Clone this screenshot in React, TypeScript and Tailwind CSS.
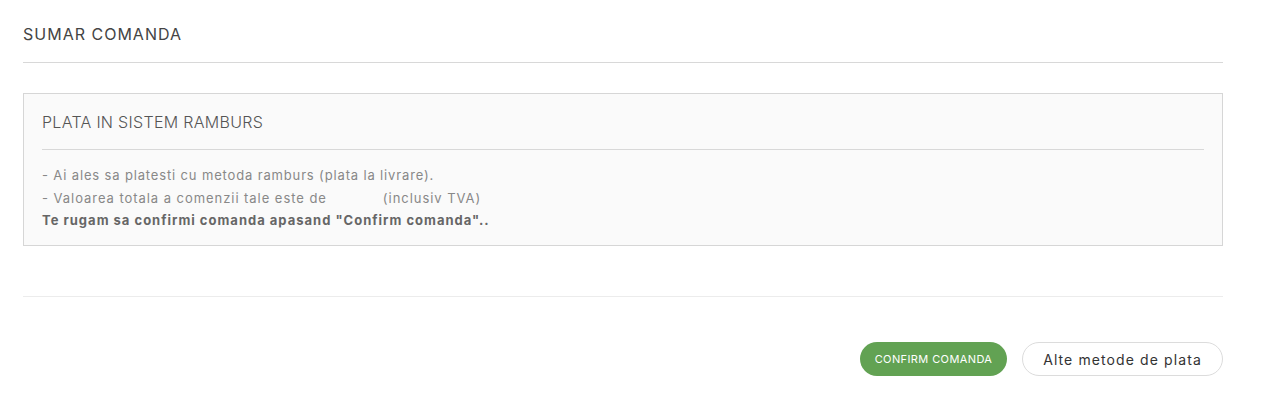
import React from 'react';

const font = { fontFamily: 'Inter, "Open Sans", "Liberation Sans", sans-serif' };

export default function App() {
  return (
    <div className="w-[1284px] h-[407px] bg-white" style={font}>
      <div className="w-[1200px] ml-[23px] pt-[24px]">
        {/* Header */}
        <h2 className="text-[16px] leading-[20px] text-[#444] tracking-[1px]">SUMAR COMANDA</h2>
        <div className="mt-[18px] h-px bg-[#d8d8d8]" />

        {/* Payment info box */}
        <div className="mt-[30px] h-[153px] border border-[#d6d6d6] bg-[#fafafa] px-[18px] pt-[18px]">
          <h3 className="text-[16px] leading-[20px] text-[#555] font-light tracking-[0.3px]">PLATA IN SISTEM RAMBURS</h3>
          <div className="mt-[17px] h-px bg-[#d8d8d8]" />
          <div className="mt-[14px] text-[13px] leading-[22.5px] text-[#888] tracking-[0.85px]">
            <p>- Ai ales sa platesti cu metoda ramburs (plata la livrare).</p>
            <p className="tracking-[0.95px]">
              - Valoarea totala a comenzii tale este de
              <span className="inline-block w-[56px]" />
              (inclusiv TVA)
            </p>
            <p className="font-bold text-[#666] tracking-[1px]">Te rugam sa confirmi comanda apasand "Confirm comanda"..</p>
          </div>
        </div>

        <div className="mt-[50px] h-px bg-[#ececec]" />

        {/* Actions */}
        <div className="mt-[45px] flex justify-end gap-[15px]">
          <button className="h-[34px] w-[147px] rounded-full bg-[#62a253] text-white text-[11px] tracking-[0.4px]">
            CONFIRM COMANDA
          </button>
          <button className="h-[34px] w-[201px] rounded-full border border-[#dcdcdc] bg-white text-[#333] text-[14px] tracking-[1.1px]">
            Alte metode de plata
          </button>
        </div>
      </div>
    </div>
  );
}
